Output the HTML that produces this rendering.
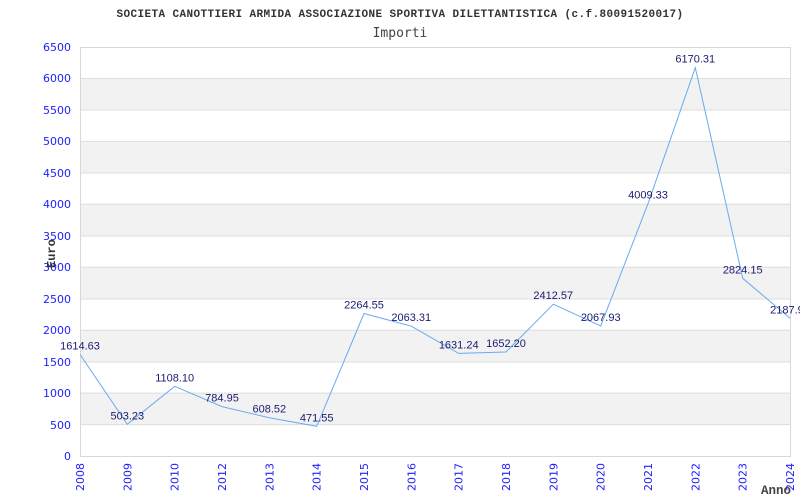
<!DOCTYPE html>
<html><head><meta charset="utf-8"><style>
html,body{margin:0;padding:0;background:#fff;width:800px;height:500px;overflow:hidden}
</style></head><body>
<svg width="800" height="500" xmlns="http://www.w3.org/2000/svg">
<rect width="800" height="500" fill="#fff"/>
<text x="400" y="17" text-anchor="middle" font-family="Liberation Mono, monospace" font-size="11" font-weight="bold" letter-spacing="0.4" fill="#333">SOCIETA CANOTTIERI ARMIDA ASSOCIAZIONE SPORTIVA DILETTANTISTICA (c.f.80091520017)</text>
<text x="400" y="37" text-anchor="middle" font-family="DejaVu Sans Mono, monospace" font-size="13" fill="#444">Importi</text>
<g fill="#f2f2f2">
<rect x="80" y="78.5" width="710" height="31.5"/>
<rect x="80" y="141.4" width="710" height="31.5"/>
<rect x="80" y="204.3" width="710" height="31.5"/>
<rect x="80" y="267.2" width="710" height="31.5"/>
<rect x="80" y="330.2" width="710" height="31.5"/>
<rect x="80" y="393.1" width="710" height="31.5"/>
</g>
<g stroke="#ddd" stroke-width="1">
<line x1="80" x2="790" y1="78.5" y2="78.5"/><line x1="80" x2="790" y1="110" y2="110"/>
<line x1="80" x2="790" y1="141.4" y2="141.4"/><line x1="80" x2="790" y1="173" y2="173"/>
<line x1="80" x2="790" y1="204.3" y2="204.3"/><line x1="80" x2="790" y1="236" y2="236"/>
<line x1="80" x2="790" y1="267.2" y2="267.2"/><line x1="80" x2="790" y1="299" y2="299"/>
<line x1="80" x2="790" y1="330.2" y2="330.2"/><line x1="80" x2="790" y1="362" y2="362"/>
<line x1="80" x2="790" y1="393.1" y2="393.1"/><line x1="80" x2="790" y1="424.6" y2="424.6"/>
</g>
<rect x="80.5" y="47.5" width="710" height="409" fill="none" stroke="#d8d8d8"/>
<g font-family="DejaVu Sans, sans-serif" font-size="11" fill="#2020ff" text-anchor="end">
<text x="71" y="51">6500</text><text x="71" y="82">6000</text><text x="71" y="114">5500</text>
<text x="71" y="145">5000</text><text x="71" y="177">4500</text><text x="71" y="208">4000</text>
<text x="71" y="240">3500</text><text x="71" y="271">3000</text><text x="71" y="303">2500</text>
<text x="71" y="334">2000</text><text x="71" y="366">1500</text><text x="71" y="397">1000</text>
<text x="71" y="429">500</text><text x="71" y="460">0</text>
</g>
<g font-family="DejaVu Sans, sans-serif" font-size="11" fill="#2020ff" text-anchor="end">
<text transform="translate(84,463) rotate(-90)">2008</text>
<text transform="translate(131.3,463) rotate(-90)">2009</text>
<text transform="translate(178.7,463) rotate(-90)">2010</text>
<text transform="translate(226,463) rotate(-90)">2012</text>
<text transform="translate(273.3,463) rotate(-90)">2013</text>
<text transform="translate(320.7,463) rotate(-90)">2014</text>
<text transform="translate(368,463) rotate(-90)">2015</text>
<text transform="translate(415.3,463) rotate(-90)">2016</text>
<text transform="translate(462.7,463) rotate(-90)">2017</text>
<text transform="translate(510,463) rotate(-90)">2018</text>
<text transform="translate(557.3,463) rotate(-90)">2019</text>
<text transform="translate(604.7,463) rotate(-90)">2020</text>
<text transform="translate(652,463) rotate(-90)">2021</text>
<text transform="translate(699.3,463) rotate(-90)">2022</text>
<text transform="translate(746.7,463) rotate(-90)">2023</text>
<text transform="translate(794,463) rotate(-90)">2024</text>
</g>
<text x="761" y="494" font-family="Liberation Mono, monospace" font-size="12.5" font-weight="bold" fill="#444">Anno</text>
<text transform="translate(55,268) rotate(-90)" font-family="Liberation Mono, monospace" font-size="12" font-weight="bold" fill="#333">Euro</text>
<polyline fill="none" stroke="#6aaaf0" stroke-width="1" points="80,354.4 127.3,424.3 174.7,386.3 222,406.6 269.3,417.7 316.7,426.3 364,313.5 411.3,326.2 458.7,353.4 506,352 553.3,304.2 600.7,325.9 648,203.7 695.3,67.7 742.7,278.3 790,318.3"/>
<g font-family="Liberation Sans, sans-serif" font-size="11" fill="#1a1a70" text-anchor="middle">
<text x="80" y="349.4">1614.63</text>
<text x="127.3" y="419.3">503.23</text>
<text x="174.7" y="381.3">1108.10</text>
<text x="222" y="401.6">784.95</text>
<text x="269.3" y="412.7">608.52</text>
<text x="316.7" y="421.3">471.55</text>
<text x="364" y="308.5">2264.55</text>
<text x="411.3" y="321.2">2063.31</text>
<text x="458.7" y="348.4">1631.24</text>
<text x="506" y="347">1652.20</text>
<text x="553.3" y="299.2">2412.57</text>
<text x="600.7" y="320.9">2067.93</text>
<text x="648" y="198.7">4009.33</text>
<text x="695.3" y="62.7">6170.31</text>
<text x="742.7" y="273.3">2824.15</text>
<text x="790" y="313.3">2187.93</text>
</g>
</svg>
</body></html>
